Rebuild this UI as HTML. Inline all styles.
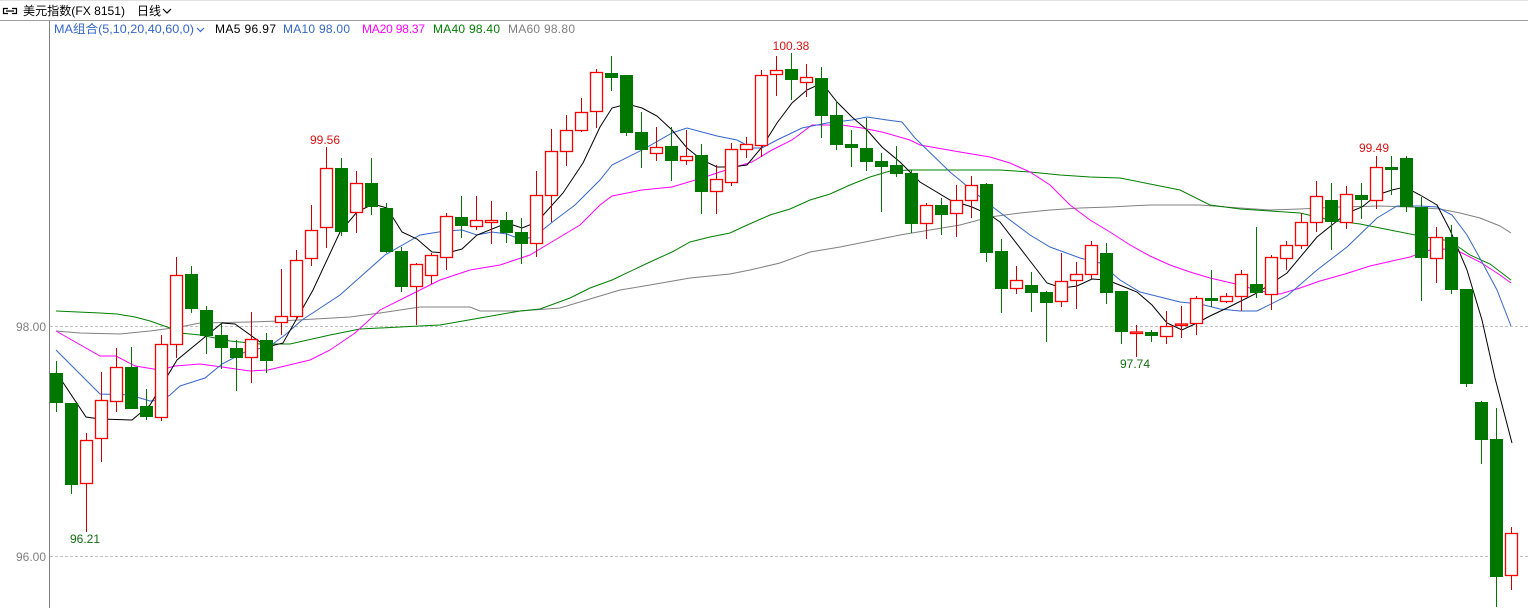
<!DOCTYPE html>
<html><head><meta charset="utf-8"><style>
html,body{margin:0;padding:0;background:#fff;width:1528px;height:608px;overflow:hidden}
svg{display:block}
text{font-family:"Liberation Sans","Noto Sans CJK SC",sans-serif;font-size:12px}
</style></head><body>
<svg width="1528" height="608" viewBox="0 0 1528 608" xmlns="http://www.w3.org/2000/svg">
<rect width="1528" height="608" fill="#fff"/>
<rect x="0" y="0" width="1528" height="1" fill="#e0e0e0"/>
<line x1="0" y1="20.5" x2="1528" y2="20.5" stroke="#a0a0a0"/>
<line x1="49.5" y1="21" x2="49.5" y2="608" stroke="#808080"/>
<g stroke="#000" fill="none" stroke-width="1.2"><path d="M8 8.5H3.5V13.5H8M12 8.5H16.5V13.5H12M6 11H14"/></g>
<text x="23" y="15" fill="#000" textLength="102" lengthAdjust="spacingAndGlyphs">美元指数(FX 8151)</text>
<text x="137" y="15" fill="#000">日线</text>
<path d="M163 9l4 4 4-4" stroke="#000" fill="none" stroke-width="1.2"/>
<text x="54" y="33" fill="#3366cc" textLength="140" lengthAdjust="spacingAndGlyphs">MA组合(5,10,20,40,60,0)</text>
<path d="M197 28l3.5 3.5 3.5-3.5" stroke="#3366cc" fill="none" stroke-width="1.2"/>
<text x="215" y="33" fill="#000" textLength="61">MA5 96.97</text>
<text x="283" y="33" fill="#3366cc" textLength="67">MA10 98.00</text>
<text x="362" y="33" fill="#ff00ff" textLength="63">MA20 98.37</text>
<text x="433" y="33" fill="#008000" textLength="67">MA40 98.40</text>
<text x="508" y="33" fill="#808080" textLength="67">MA60 98.80</text>
<g stroke="#c0c0c0" stroke-dasharray="3,2"><line x1="50" y1="326.5" x2="1528" y2="326.5"/><line x1="50" y1="556.5" x2="1528" y2="556.5"/></g>
<text x="46" y="331" fill="#808080" text-anchor="end">98.00</text>
<text x="46" y="561" fill="#808080" text-anchor="end">96.00</text>
<g fill="none" stroke-width="1">
<polyline stroke="#808080" points="56,331 80,333 120,334 150,331 180,327 200,323 250,322 280,321 350,317 380,313 420,307 470,307 480,311 520,311 560,308 590,299 620,290 650,285 690,278 730,274 750,270 780,263 810,252 840,247 870,241 900,235 930,230 960,225 990,217 1020,213 1050,210 1080,208 1110,207 1150,205 1200,205 1240,208 1270,210 1300,209 1340,207 1380,206 1410,207 1440,209 1460,213 1480,218 1500,226 1511,233"/>
<polyline stroke="#008000" points="56,311 100,313 117,314 135,317 150,321 170,328 180,333 200,335 230,341 260,344 290,344 330,335 360,329 400,327 440,325 480,318 520,311 540,309 570,298 590,288 612,280 650,262 672,252 690,242 710,237 730,233 745,226 770,215 790,209 810,200 830,194 850,185 870,177 890,171 910,170 1000,170 1030,172 1060,175 1090,177 1120,178 1150,184 1180,190 1210,205 1240,209 1270,211 1300,213 1330,220 1360,224 1390,230 1420,236 1450,241 1470,255 1490,264 1511,280"/>
<polyline stroke="#ff00ff" points="56,331 100,356 116,356 135,366 160,370 175,366 200,364 222,367 250,371 268,370 285,366 310,360 330,350 355,333 380,310 410,295 440,280 470,270 500,265 530,255 555,240 580,225 600,205 612,196 642,190 672,187 702,178 732,168 752,162 772,150 792,140 812,125 842,125 862,128 882,132 910,140 920,145 960,152 990,157 1010,163 1030,172 1050,185 1070,205 1090,220 1110,232 1130,245 1150,256 1170,265 1190,272 1210,278 1240,285 1260,291 1280,294 1300,288 1320,281 1345,274 1370,266 1392,261 1410,257 1430,250 1445,249 1460,252 1480,262 1500,275 1511,283"/>
<polyline stroke="#3366cc" points="56,350 100,394 130,395 150,401 162,400 170,395 180,386 205,378 222,364 245,352 270,346 285,335 302,320 340,295 385,255 420,235 445,231 462,230 477,235 492,232 507,234 522,240 535,236 555,220 575,205 600,180 612,165 642,150 672,133 687,128 717,136 737,140 752,148 762,148 777,140 802,128 827,123 852,120 867,117 887,120 902,122 915,138 950,172 990,205 1030,235 1050,247 1080,258 1100,263 1120,280 1140,292 1160,297 1180,302 1200,304 1220,309 1240,311 1257,311 1287,296 1317,270 1347,247 1377,218 1397,206 1420,206 1437,207 1452,215 1467,235 1482,262 1497,290 1511,326"/>
<polyline stroke="#000" points="56,372 86,417 100,419 132,420 150,405 177,360 222,323 235,324 267,347 283,343 313,290 340,232 357,212 373,204 387,208 402,232 417,239 432,252 447,253 462,249 477,235 507,223 522,228 537,222 563,193 583,163 600,127 612,108 627,104 642,108 657,116 672,130 687,148 702,160 717,167 732,167 747,165 762,147 777,123 792,103 807,90 822,83 837,102 852,117 867,130 882,147 900,162 920,182 950,200 972,207 990,215 1000,222 1027,257 1047,283 1062,288 1077,286 1092,279 1107,280 1122,286 1137,292 1152,305 1167,323 1182,330 1197,323 1210,316 1227,308 1257,293 1287,273 1317,237 1332,225 1347,213 1362,207 1377,195 1392,190 1405,187 1420,195 1437,205 1450,230 1467,270 1482,320 1495,378 1512,443"/>
</g>
<g stroke="#007800" fill="#007800">
<line x1="56.5" y1="361" x2="56.5" y2="412"/><rect x="50" y="373" width="13" height="30" stroke="none"/>
<line x1="71.5" y1="403" x2="71.5" y2="494"/><rect x="65" y="403" width="13" height="82" stroke="none"/>
<line x1="131.5" y1="347" x2="131.5" y2="409"/><rect x="125" y="367" width="13" height="42" stroke="none"/>
<line x1="146.5" y1="389" x2="146.5" y2="420"/><rect x="140" y="406" width="13" height="11" stroke="none"/>
<line x1="191.5" y1="266" x2="191.5" y2="313"/><rect x="185" y="274" width="13" height="35" stroke="none"/>
<line x1="206.5" y1="306" x2="206.5" y2="354"/><rect x="200" y="310" width="13" height="26" stroke="none"/>
<line x1="221.5" y1="324" x2="221.5" y2="369"/><rect x="215" y="335" width="13" height="13" stroke="none"/>
<line x1="236.5" y1="340" x2="236.5" y2="391"/><rect x="230" y="348" width="13" height="10" stroke="none"/>
<line x1="266.5" y1="333" x2="266.5" y2="373"/><rect x="260" y="340" width="13" height="21" stroke="none"/>
<line x1="341.5" y1="158" x2="341.5" y2="236"/><rect x="335" y="168" width="13" height="64" stroke="none"/>
<line x1="371.5" y1="158" x2="371.5" y2="215"/><rect x="365" y="183" width="13" height="24" stroke="none"/>
<line x1="386.5" y1="203" x2="386.5" y2="253"/><rect x="380" y="208" width="13" height="44" stroke="none"/>
<line x1="401.5" y1="247" x2="401.5" y2="292"/><rect x="395" y="251" width="13" height="36" stroke="none"/>
<line x1="461.5" y1="196" x2="461.5" y2="238"/><rect x="455" y="217" width="13" height="9" stroke="none"/>
<line x1="506.5" y1="212" x2="506.5" y2="243"/><rect x="500" y="220" width="13" height="13" stroke="none"/>
<line x1="521.5" y1="218" x2="521.5" y2="264"/><rect x="515" y="232" width="13" height="12" stroke="none"/>
<line x1="611.5" y1="56" x2="611.5" y2="91"/><rect x="605" y="73" width="13" height="5" stroke="none"/>
<line x1="626.5" y1="75" x2="626.5" y2="136"/><rect x="620" y="75" width="13" height="58" stroke="none"/>
<line x1="641.5" y1="112" x2="641.5" y2="168"/><rect x="635" y="132" width="13" height="18" stroke="none"/>
<line x1="671.5" y1="127" x2="671.5" y2="181"/><rect x="665" y="146" width="13" height="15" stroke="none"/>
<line x1="701.5" y1="144" x2="701.5" y2="214"/><rect x="695" y="155" width="13" height="37" stroke="none"/>
<line x1="791.5" y1="53" x2="791.5" y2="100"/><rect x="785" y="69" width="13" height="11" stroke="none"/>
<line x1="821.5" y1="67" x2="821.5" y2="138"/><rect x="815" y="78" width="13" height="38" stroke="none"/>
<line x1="836.5" y1="101" x2="836.5" y2="150"/><rect x="830" y="115" width="13" height="30" stroke="none"/>
<line x1="851.5" y1="130" x2="851.5" y2="167"/><rect x="845" y="144" width="13" height="4" stroke="none"/>
<line x1="866.5" y1="118" x2="866.5" y2="171"/><rect x="860" y="148" width="13" height="14" stroke="none"/>
<line x1="881.5" y1="153" x2="881.5" y2="212"/><rect x="875" y="161" width="13" height="6" stroke="none"/>
<line x1="896.5" y1="146" x2="896.5" y2="177"/><rect x="890" y="165" width="13" height="9" stroke="none"/>
<line x1="911.5" y1="170" x2="911.5" y2="233"/><rect x="905" y="173" width="13" height="51" stroke="none"/>
<line x1="941.5" y1="198" x2="941.5" y2="235"/><rect x="935" y="205" width="13" height="10" stroke="none"/>
<line x1="986.5" y1="183" x2="986.5" y2="262"/><rect x="980" y="184" width="13" height="69" stroke="none"/>
<line x1="1001.5" y1="239" x2="1001.5" y2="313"/><rect x="995" y="251" width="13" height="38" stroke="none"/>
<line x1="1031.5" y1="272" x2="1031.5" y2="312"/><rect x="1025" y="285" width="13" height="8" stroke="none"/>
<line x1="1046.5" y1="291" x2="1046.5" y2="342"/><rect x="1040" y="292" width="13" height="11" stroke="none"/>
<line x1="1106.5" y1="243" x2="1106.5" y2="304"/><rect x="1100" y="253" width="13" height="40" stroke="none"/>
<line x1="1121.5" y1="291" x2="1121.5" y2="344"/><rect x="1115" y="291" width="13" height="41" stroke="none"/>
<line x1="1151.5" y1="330" x2="1151.5" y2="342"/><rect x="1145" y="332" width="13" height="4" stroke="none"/>
<line x1="1211.5" y1="270" x2="1211.5" y2="307"/><rect x="1205" y="298" width="13" height="3" stroke="none"/>
<line x1="1256.5" y1="227" x2="1256.5" y2="298"/><rect x="1250" y="284" width="13" height="9" stroke="none"/>
<line x1="1331.5" y1="183" x2="1331.5" y2="250"/><rect x="1325" y="200" width="13" height="22" stroke="none"/>
<line x1="1361.5" y1="183" x2="1361.5" y2="219"/><rect x="1355" y="195" width="13" height="5" stroke="none"/>
<line x1="1391.5" y1="156" x2="1391.5" y2="195"/><rect x="1385" y="167" width="13" height="3" stroke="none"/>
<line x1="1406.5" y1="156" x2="1406.5" y2="212"/><rect x="1400" y="158" width="13" height="49" stroke="none"/>
<line x1="1421.5" y1="197" x2="1421.5" y2="301"/><rect x="1415" y="207" width="13" height="51" stroke="none"/>
<line x1="1451.5" y1="225" x2="1451.5" y2="294"/><rect x="1445" y="237" width="13" height="53" stroke="none"/>
<line x1="1466.5" y1="289" x2="1466.5" y2="387"/><rect x="1460" y="289" width="13" height="95" stroke="none"/>
<line x1="1481.5" y1="401" x2="1481.5" y2="464"/><rect x="1475" y="402" width="13" height="38" stroke="none"/>
<line x1="1496.5" y1="408" x2="1496.5" y2="607"/><rect x="1490" y="439" width="13" height="138" stroke="none"/>
</g>
<g stroke="#cc0000" fill="none">
<line x1="86.5" y1="433" x2="86.5" y2="532"/>
<line x1="101.5" y1="372" x2="101.5" y2="462"/>
<line x1="116.5" y1="348" x2="116.5" y2="412"/>
<line x1="161.5" y1="335" x2="161.5" y2="421"/>
<line x1="176.5" y1="257" x2="176.5" y2="358"/>
<line x1="251.5" y1="312" x2="251.5" y2="383"/>
<line x1="281.5" y1="269" x2="281.5" y2="335"/>
<line x1="296.5" y1="250" x2="296.5" y2="320"/>
<line x1="311.5" y1="205" x2="311.5" y2="266"/>
<line x1="326.5" y1="147" x2="326.5" y2="248"/>
<line x1="356.5" y1="171" x2="356.5" y2="233"/>
<line x1="416.5" y1="263" x2="416.5" y2="325"/>
<line x1="431.5" y1="253" x2="431.5" y2="284"/>
<line x1="446.5" y1="213" x2="446.5" y2="270"/>
<line x1="476.5" y1="196" x2="476.5" y2="230"/>
<line x1="491.5" y1="201" x2="491.5" y2="244"/>
<line x1="536.5" y1="171" x2="536.5" y2="257"/>
<line x1="551.5" y1="129" x2="551.5" y2="222"/>
<line x1="566.5" y1="115" x2="566.5" y2="166"/>
<line x1="581.5" y1="98" x2="581.5" y2="132"/>
<line x1="596.5" y1="69" x2="596.5" y2="128"/>
<line x1="656.5" y1="127" x2="656.5" y2="161"/>
<line x1="686.5" y1="130" x2="686.5" y2="165"/>
<line x1="716.5" y1="165" x2="716.5" y2="214"/>
<line x1="731.5" y1="143" x2="731.5" y2="186"/>
<line x1="746.5" y1="137" x2="746.5" y2="158"/>
<line x1="761.5" y1="70" x2="761.5" y2="157"/>
<line x1="776.5" y1="56" x2="776.5" y2="96"/>
<line x1="806.5" y1="64" x2="806.5" y2="97"/>
<line x1="926.5" y1="203" x2="926.5" y2="239"/>
<line x1="956.5" y1="185" x2="956.5" y2="237"/>
<line x1="971.5" y1="176" x2="971.5" y2="218"/>
<line x1="1016.5" y1="266" x2="1016.5" y2="294"/>
<line x1="1061.5" y1="253" x2="1061.5" y2="307"/>
<line x1="1076.5" y1="262" x2="1076.5" y2="309"/>
<line x1="1091.5" y1="241" x2="1091.5" y2="279"/>
<line x1="1136.5" y1="325" x2="1136.5" y2="357"/>
<line x1="1166.5" y1="311" x2="1166.5" y2="344"/>
<line x1="1181.5" y1="306" x2="1181.5" y2="338"/>
<line x1="1196.5" y1="296" x2="1196.5" y2="335"/>
<line x1="1226.5" y1="293" x2="1226.5" y2="303"/>
<line x1="1241.5" y1="270" x2="1241.5" y2="311"/>
<line x1="1271.5" y1="255" x2="1271.5" y2="310"/>
<line x1="1286.5" y1="241" x2="1286.5" y2="270"/>
<line x1="1301.5" y1="213" x2="1301.5" y2="249"/>
<line x1="1316.5" y1="181" x2="1316.5" y2="232"/>
<line x1="1346.5" y1="186" x2="1346.5" y2="229"/>
<line x1="1376.5" y1="156" x2="1376.5" y2="209"/>
<line x1="1436.5" y1="227" x2="1436.5" y2="283"/>
<line x1="1511.5" y1="527" x2="1511.5" y2="590"/>
</g>
<g stroke="#ff0000" fill="#fff" stroke-width="1.3">
<rect x="80.5" y="440.5" width="12" height="43"/>
<rect x="95.5" y="400.5" width="12" height="38"/>
<rect x="110.5" y="367.5" width="12" height="34"/>
<rect x="155.5" y="344.5" width="12" height="73"/>
<rect x="170.5" y="275.5" width="12" height="69"/>
<rect x="245.5" y="339.5" width="12" height="18"/>
<rect x="275.5" y="316.5" width="12" height="6"/>
<rect x="290.5" y="260.5" width="12" height="56"/>
<rect x="305.5" y="230.5" width="12" height="28"/>
<rect x="320.5" y="168.5" width="12" height="59"/>
<rect x="350.5" y="183.5" width="12" height="29"/>
<rect x="410.5" y="264.5" width="12" height="22"/>
<rect x="425.5" y="255.5" width="12" height="20"/>
<rect x="440.5" y="216.5" width="12" height="41"/>
<rect x="470.5" y="220.5" width="12" height="6"/>
<rect x="485.5" y="220.5" width="12" height="2"/>
<rect x="530.5" y="195.5" width="12" height="48"/>
<rect x="545.5" y="151.5" width="12" height="44"/>
<rect x="560.5" y="130.5" width="12" height="21"/>
<rect x="575.5" y="112.5" width="12" height="18"/>
<rect x="590.5" y="72.5" width="12" height="39"/>
<rect x="650.5" y="147.5" width="12" height="6"/>
<rect x="680.5" y="156.5" width="12" height="4"/>
<rect x="710.5" y="179.5" width="12" height="12"/>
<rect x="725.5" y="149.5" width="12" height="33"/>
<rect x="740.5" y="144.5" width="12" height="5"/>
<rect x="755.5" y="75.5" width="12" height="70"/>
<rect x="770.5" y="70.5" width="12" height="4"/>
<rect x="800.5" y="77.5" width="12" height="5"/>
<rect x="920.5" y="205.5" width="12" height="18"/>
<rect x="950.5" y="200.5" width="12" height="13"/>
<rect x="965.5" y="185.5" width="12" height="15"/>
<rect x="1010.5" y="280.5" width="12" height="8"/>
<rect x="1055.5" y="281.5" width="12" height="20"/>
<rect x="1070.5" y="274.5" width="12" height="6"/>
<rect x="1085.5" y="245.5" width="12" height="29"/>
<rect x="1130.5" y="332" width="12" height="1.5"/>
<rect x="1160.5" y="326.5" width="12" height="10"/>
<rect x="1175.5" y="324" width="12" height="1.5"/>
<rect x="1190.5" y="298.5" width="12" height="25"/>
<rect x="1220.5" y="296.5" width="12" height="5"/>
<rect x="1235.5" y="274.5" width="12" height="22"/>
<rect x="1265.5" y="257.5" width="12" height="37"/>
<rect x="1280.5" y="245.5" width="12" height="13"/>
<rect x="1295.5" y="222.5" width="12" height="23"/>
<rect x="1310.5" y="196.5" width="12" height="26"/>
<rect x="1340.5" y="194.5" width="12" height="28"/>
<rect x="1370.5" y="167.5" width="12" height="33"/>
<rect x="1430.5" y="237.5" width="12" height="21"/>
<rect x="1505.5" y="533.5" width="12" height="42"/>
</g>
<text x="325" y="144" fill="#e01010" text-anchor="middle">99.56</text>
<text x="791" y="50" fill="#e01010" text-anchor="middle">100.38</text>
<text x="1374" y="152" fill="#e01010" text-anchor="middle">99.49</text>
<text x="85" y="543" fill="#107010" text-anchor="middle">96.21</text>
<text x="1135" y="368" fill="#107010" text-anchor="middle">97.74</text>
</svg>
</body></html>
